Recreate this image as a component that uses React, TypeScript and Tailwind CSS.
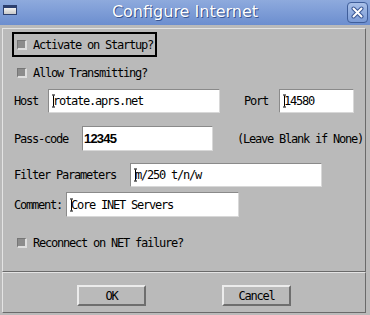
const mono = { fontFamily: '"DejaVu Sans Mono", "Liberation Mono", monospace' };
const t = 'text-[12px] tracking-[-1.22px] leading-none';

function Check() {
  return (
    <span className="inline-block w-[10px] h-[10px] shrink-0 bg-[#8c8c8c] border-t border-l border-r-2 border-b-2 border-t-[#767676] border-l-[#767676] border-r-[#dedede] border-b-[#dedede]" />
  );
}

function Cursor() {
  return (
    <span className="absolute left-[3px] top-1/2 -translate-y-1/2 h-[13px] w-[3px] flex flex-col items-center justify-between">
      <span className="w-[3px] h-px bg-black" />
      <span className="w-px flex-1 bg-black" />
      <span className="w-[3px] h-px bg-black" />
    </span>
  );
}

function Field({ width, value, cursor = true, bold = false }: { width: string; value: string; cursor?: boolean; bold?: boolean }) {
  return (
    <div
      className={`relative bg-white h-full flex items-center border-t border-l border-r border-b border-t-[#8a8a8a] border-l-[#8a8a8a] border-r-[#d8d8d8] border-b-[#d8d8d8] ${width} ${bold ? 'pl-[1px]' : 'pl-[4px]'}`}
    >
      {cursor && <Cursor />}
      {bold ? (
        <span className="text-[13px] tracking-[-0.8px] font-bold text-black" style={{ fontFamily: '"Liberation Sans", Arial, sans-serif' }}>
          {value}
        </span>
      ) : (
        <span className={`${t} text-black whitespace-pre`} style={mono}>
          {value}
        </span>
      )}
    </div>
  );
}

function Button({ label }: { label: string }) {
  return (
    <div className="w-[69px] h-[21px] flex items-center justify-center bg-[#bababa] border-2 border-t-[#ececec] border-l-[#ececec] border-r-[#6e6e6e] border-b-[#6e6e6e]">
      <span className={`${t} text-black`} style={mono}>
        {label}
      </span>
    </div>
  );
}

export default function App() {
  return (
    <div className="w-[370px] h-[315px] bg-[#bababa] overflow-hidden flex flex-col">
      {/* title bar */}
      <div className="h-[25px] shrink-0 relative flex items-center justify-center bg-gradient-to-b from-[#8eaadd] to-[#6c8ecf]">
        <div className="absolute left-[3px] top-[5px] w-[14px] h-[10px] border border-[#2c3f6e] bg-gradient-to-b from-white to-[#c9c9c9]">
          <div className="h-[2px] bg-[#2c3f6e]" />
        </div>
        <span
          className="text-[16px] font-medium text-white leading-none mt-[-1px] [text-shadow:1px_1px_0_#3a5590,-0.5px_0_0_#5c7cba]"
          style={{ fontFamily: '"DejaVu Sans", Verdana, sans-serif' }}
        >
          Configure Internet
        </span>
        <div className="absolute right-[2px] top-[2px] w-[21px] h-[21px] rounded-[4px] border border-[#3f5e9a] bg-gradient-to-b from-[#a9c0e8] to-[#7b9bd6] flex items-center justify-center">
          <svg width="13" height="13" viewBox="0 0 13 13">
            <path d="M2.5 2.5 L10.5 10.5 M10.5 2.5 L2.5 10.5" stroke="#3a5794" strokeWidth="4" strokeLinecap="round" />
            <path d="M2.5 2.5 L10.5 10.5 M10.5 2.5 L2.5 10.5" stroke="#ffffff" strokeWidth="2" strokeLinecap="round" />
          </svg>
        </div>
      </div>

      {/* body */}
      <div className="pt-[3px] pl-[2px] pr-[4px] flex flex-col text-black">
        <div className="h-[244px] flex flex-col border-t border-l border-r border-b border-t-[#e4e4e4] border-l-[#e4e4e4] border-r-[#6a6a6a] border-b-[#6a6a6a]">
          <div className="mt-[3px] ml-[9px] w-[145px] h-[25px] border-2 border-black flex items-center pl-[3px] gap-[6px]">
            <Check />
            <span className={t} style={mono}>Activate on Startup?</span>
          </div>

          <div className="mt-[10px] ml-[14px] h-[12px] flex items-center gap-[6px]">
            <Check />
            <span className={t} style={mono}>Allow Transmitting?</span>
          </div>

          <div className="mt-[10px] ml-[11px] h-[24px] flex items-center">
            <span className={`w-[34px] ${t}`} style={mono}>Host</span>
            <Field width="w-[172px]" value="rotate.aprs.net" />
            <span className={`ml-[24px] w-[35px] ${t}`} style={mono}>Port</span>
            <Field width="w-[75px]" value="14580" />
          </div>

          <div className="mt-[13px] ml-[11px] h-[25px] flex items-center">
            <span className={`w-[68px] ${t}`} style={mono}>Pass-code</span>
            <Field width="w-[131px]" value="12345" cursor={false} bold />
            <span className={`ml-[24px] ${t}`} style={mono}>(Leave Blank if None)</span>
          </div>

          <div className="mt-[12px] ml-[11px] h-[24px] flex items-center">
            <span className={`w-[116px] ${t}`} style={mono}>Filter Parameters</span>
            <Field width="w-[192px]" value="m/250 t/n/w" />
          </div>

          <div className="mt-[5px] ml-[11px] h-[25px] flex items-center">
            <span className={`w-[52px] ${t}`} style={mono}>Comment:</span>
            <Field width="w-[173px]" value="Core INET Servers" />
          </div>

          <div className="mt-[20px] ml-[14px] h-[12px] flex items-center gap-[6px]">
            <Check />
            <span className={t} style={mono}>Reconnect on NET failure?</span>
          </div>
        </div>

        <div className="h-[41px] flex items-start border-t border-l border-r border-b border-t-[#e4e4e4] border-l-[#e4e4e4] border-r-[#6a6a6a] border-b-[#6a6a6a]">
          <div className="mt-[12px] ml-[74px] flex gap-[76px]">
            <Button label="OK" />
            <Button label="Cancel" />
          </div>
        </div>
      </div>
    </div>
  );
}
